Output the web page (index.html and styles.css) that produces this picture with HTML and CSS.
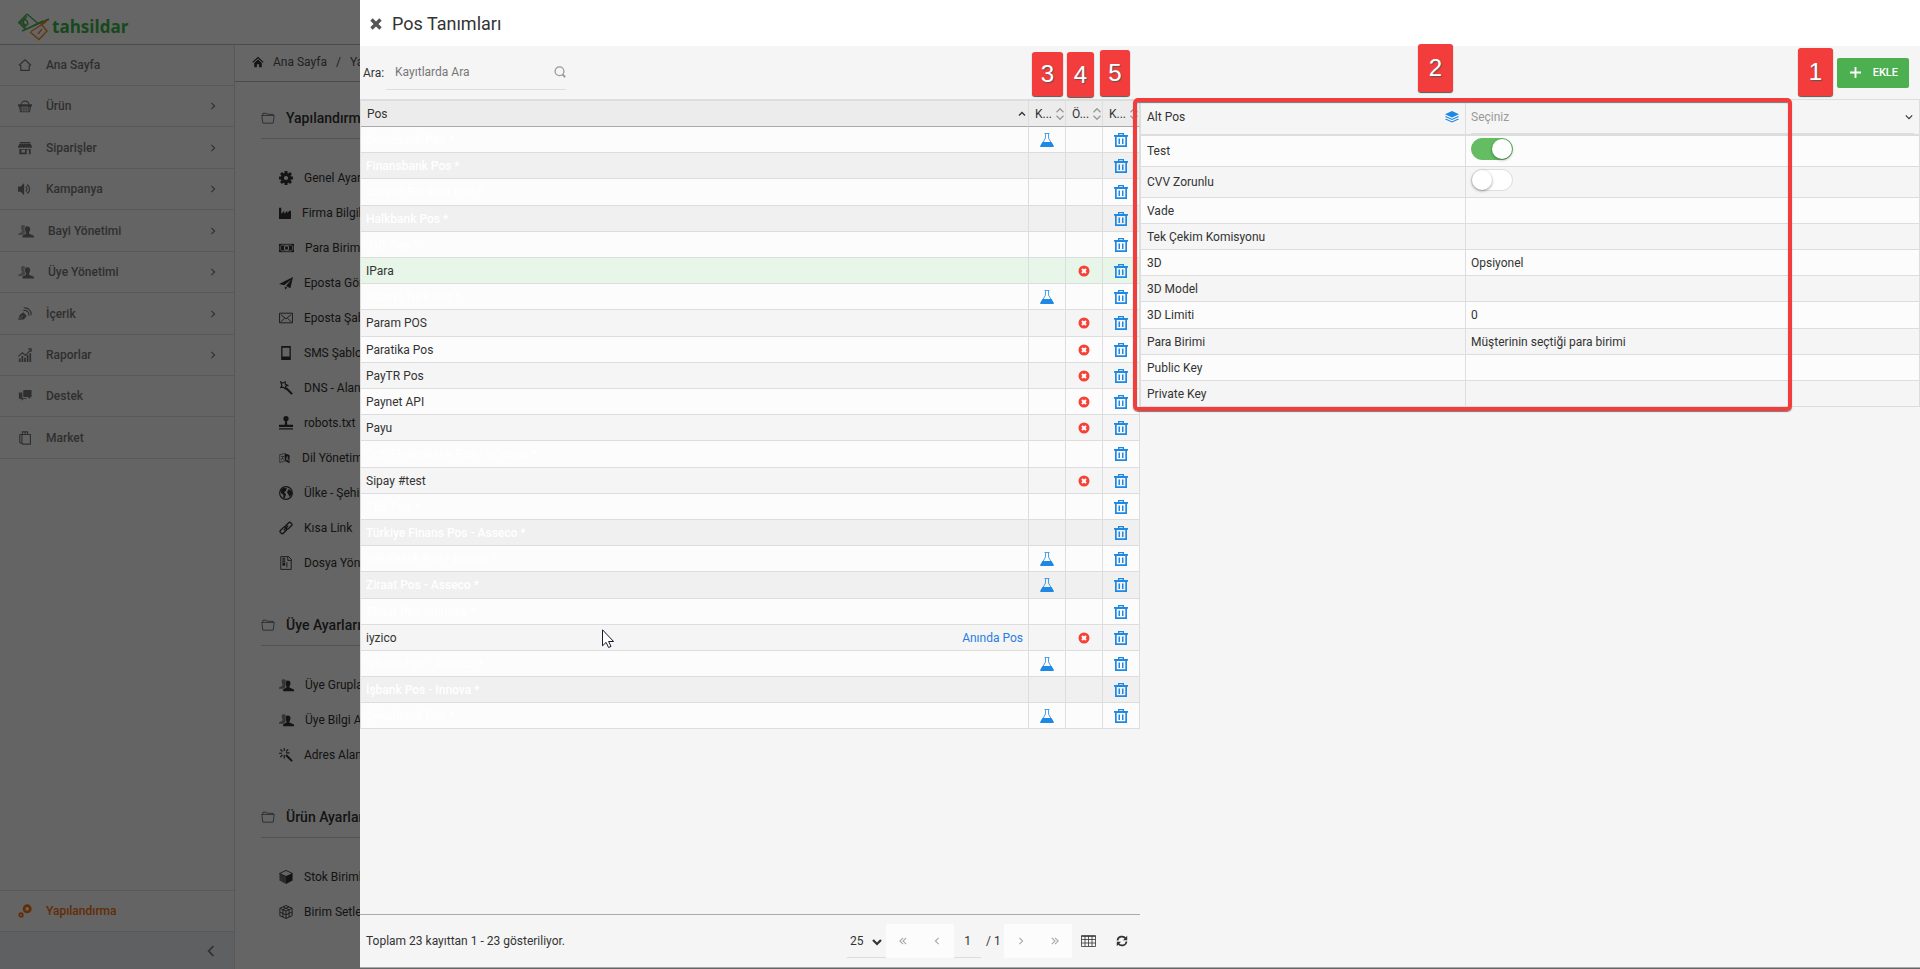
FILE: index.html
```html
<!DOCTYPE html>
<html lang="tr">
<head>
<meta charset="utf-8">
<title>Pos Tanımları</title>
<link rel="stylesheet" href="styles.css">
</head>
<body>
<svg class="sprite" aria-hidden="true">
  <symbol id="i-home" viewBox="0 0 16 16"><path d="M1 8.500 8 2l7 6.500M3.200 8v6.200h9.600V8" fill="none" stroke="currentColor" stroke-width="1.400"/></symbol>
  <symbol id="i-homes" viewBox="0 0 16 16"><path d="M.5 8 8 1l7.500 7-1 1L8 3.200 1.500 9zM3 9.200 8 4.800l5 4.400V15H9.500v-4h-3v4H3z" fill="currentColor"/></symbol>
  <symbol id="i-basket" viewBox="0 0 16 16"><path d="M3.500 7C3.500 1 12.500 1 12.500 7" fill="none" stroke="currentColor" stroke-width="1.300"/><path d="M0 6h16v2.200h-1L13.700 15H2.300L1 8.200H0z" fill="currentColor"/><path d="M2 10.200h12M2.500 12.700h11M5.500 8v7M8 8v7M10.500 8v7" stroke="#fafafa" stroke-width=".8"/></symbol>
  <symbol id="i-shop" viewBox="0 0 16 16"><path d="M2 1h12v1.500H2zM1.500 3h13L16 6.500c0 2-2.500 2-2.700.3-.4 1.700-2.300 1.700-2.600 0-.4 1.700-2.300 1.700-2.700 0-.4 1.700-2.300 1.700-2.700 0-.3 1.700-2.200 1.700-2.600 0C2.500 8.500 0 8.500 0 6.500zM1.500 9h13v6h-13z" fill="currentColor"/><path d="M4 10h4v3H4zM10 10h2.500v5H10z" fill="#fafafa"/></symbol>
  <symbol id="i-sound" viewBox="0 0 16 16"><path d="M0 5h3l4-4v14l-4-4H0z" fill="currentColor"/><path d="M8.800 5.200c1.800 1.400 1.800 4.200 0 5.600M10.500 3c3.700 2.500 3.700 7.500 0 10" fill="none" stroke="currentColor" stroke-width="1.400"/></symbol>
  <symbol id="i-users" viewBox="0 0 18 16"><path d="M5 1C2.500 1 3 5 4.200 7L4 9 0 11v1.500h5l3-2-1-6 1.500-2C7.500 1 6 1 5 1z" fill="currentColor" opacity=".6"/><path d="M10.500 2.500C7 2.500 7.500 7 9 9.500V11L5 13v2.500h13V13.500L12.500 11V9.500C14.500 7 14.500 2.500 10.500 2.500z" fill="currentColor"/></symbol>
  <symbol id="i-pen" viewBox="0 0 16 16"><path d="M0 15 2 9l4-3 4 4-3 4z" fill="currentColor"/><path d="M1 14.500 5.500 10" stroke="#fafafa"/><path d="M6 4c4-1 7 2 6.500 6M6.500 1.200c5-1 9 3 8.500 8.300" fill="none" stroke="currentColor" stroke-width="1.300"/></symbol>
  <symbol id="i-chart" viewBox="0 0 16 16"><path d="M1 12h2v4H1zM4 9h2v7H4zM7 11h2v5H7zM10 8h2v8h-2zM13 6h2v10h-2z" fill="currentColor"/><path d="m.5 9.500 4.500-4 3.500 3L15 1.500M11.500 1H15v3.500" fill="none" stroke="currentColor" stroke-width="1.300"/></symbol>
  <symbol id="i-chat" viewBox="0 0 16 16"><path d="M6 1h9.500v8H14v2.500L11 9H6z" fill="currentColor"/><path d="M1 4h4v6.200h5V11H6.500L4 13.500V11H1z" fill="currentColor"/></symbol>
  <symbol id="i-bag" viewBox="0 0 16 16"><path d="M4.500 4h9.700v11H5.500l-1-1zM2 4h2.500M2 4v9l3 2M5 4V1h3v3M8 1h3v3" fill="none" stroke="currentColor" stroke-width="1.300"/></symbol>
  <symbol id="i-gears" viewBox="0 0 16 16"><circle cx="10.500" cy="5.500" r="3.600" fill="none" stroke="currentColor" stroke-width="3"/><circle cx="3.500" cy="12.500" r="2" fill="none" stroke="currentColor" stroke-width="2"/></symbol>
  <symbol id="i-right" viewBox="0 0 10 10"><path d="m3 1 4 4-4 4" fill="none" stroke="currentColor" stroke-width="1.400"/></symbol>
  <symbol id="i-bold-right" viewBox="0 0 10 10"><path d="m3 1 4 4-4 4" fill="none" stroke="currentColor" stroke-width="2.200"/></symbol>
  <symbol id="i-left" viewBox="0 0 10 10"><path d="M7 1 3 5l4 4" fill="none" stroke="currentColor" stroke-width="1.400"/></symbol>
  <symbol id="i-dright" viewBox="0 0 10 10"><path d="m1 1 4 4-4 4M5 1l4 4-4 4" fill="none" stroke="currentColor" stroke-width="1.400"/></symbol>
  <symbol id="i-dleft" viewBox="0 0 10 10"><path d="M5 1 1 5l4 4M9 1 5 5l4 4" fill="none" stroke="currentColor" stroke-width="1.400"/></symbol>
  <symbol id="i-folder" viewBox="0 0 16 14"><path d="M.700 4h14.600l-1.300 9H2zM2 4V1.500h4.500L7.500 2.700H14V4" fill="none" stroke="currentColor" stroke-width=".9"/></symbol>
  <symbol id="i-gear" viewBox="0 0 16 16"><circle cx="8" cy="8" r="4.200" fill="none" stroke="currentColor" stroke-width="3.600"/><path d="M8 0v3M8 13v3M0 8h3M13 8h3M2.300 2.300l2 2M11.700 11.700l2 2M13.700 2.300l-2 2M4.300 11.700l-2 2" stroke="currentColor" stroke-width="3.400"/></symbol>
  <symbol id="i-factory" viewBox="0 0 16 16"><path d="M0 1h3v8l4-4v4l4-4v3l3-3h2v11H0z" fill="currentColor"/></symbol>
  <symbol id="i-money" viewBox="0 0 18 12"><path d="M0 1h18v10H0z" fill="currentColor"/><path d="M3 2.500h12l1.500 1.500v4L15 9.500H3L1.500 8V4z" fill="none" stroke="#fff"/><circle cx="9" cy="6" r="3.200" fill="#fff"/><circle cx="9" cy="6" r="2" fill="currentColor"/></symbol>
  <symbol id="i-plane" viewBox="0 0 16 16"><path d="M16 1 13 14 8 11.500 14 4 6 10.500 0 9zM6.500 12l3 1.300L7 15.500z" fill="currentColor"/></symbol>
  <symbol id="i-mail" viewBox="0 0 16 14"><path d="M.600 1.500h14.800v11H.600zM2 3l6 5 6-5M2 11.500l4-4M14 11.500l-4-4" fill="none" stroke="currentColor"/></symbol>
  <symbol id="i-phone" viewBox="0 0 16 16"><path d="M2.500 0h11v16h-11zM4 2v10h8V2z" fill="currentColor" fill-rule="evenodd"/></symbol>
  <symbol id="i-wand" viewBox="0 0 16 16"><path d="m8 8 7 7" stroke="currentColor" stroke-width="2.400"/><path d="m2 1 2.500 1.500L7 1l.3 2.800L10 5 7.500 6.200 7 9 4.800 7 2 7.500 3.200 5z" fill="none" stroke="currentColor" stroke-width="1.300"/></symbol>
  <symbol id="i-magic" viewBox="0 0 16 16"><path d="m8 8 7 7" stroke="currentColor" stroke-width="2.400"/><path d="M6 0v3.500M6 8v4M0 6h3.500M8 5.500h4M1.500 1.500l2.500 2.500M10.500 1.500 8 4M1.500 10.500 4 8" stroke="currentColor" stroke-width="1.300"/></symbol>
  <symbol id="i-stamp" viewBox="0 0 16 16"><circle cx="8" cy="3" r="3" fill="currentColor"/><path d="M7 5h2l.5 5H16v2.500H0V10h6.500zM0 14h16v1.500H0z" fill="currentColor"/></symbol>
  <symbol id="i-lang" viewBox="0 0 16 16"><path d="M1 3.500 8 2v10l-7 2zM3 6h4M5 5v2L3 11M4 8l3 2" fill="none" stroke="currentColor" opacity=".8"/><path d="m8 2 6 2v11l-6-3z" fill="currentColor"/><path d="m9.500 11 1.500-5 1.500 6M10 9.500l2 .5" fill="none" stroke="#fff"/></symbol>
  <symbol id="i-globe" viewBox="0 0 16 16"><circle cx="8" cy="8" r="7.300" fill="none" stroke="currentColor" stroke-width="1.300"/><path d="M2 4.500 5 2l4 .5-1 3-2 1.500 2 2.500L6.500 14 5 13.500V10L2 8zM11 3.500 14.500 6l.5 3-3 3.500L10.500 9 9 7z" fill="currentColor"/></symbol>
  <symbol id="i-link" viewBox="0 0 16 16"><g fill="none" stroke="currentColor" stroke-width="1.500"><rect x="7" y="3" width="8" height="4.600" rx="1.500" transform="rotate(-45 11 5.300)"/><rect x="1" y="8.400" width="8" height="4.600" rx="1.500" transform="rotate(-45 5 10.700)"/><path d="m5.500 10.500 5-5"/></g></symbol>
  <symbol id="i-zip" viewBox="0 0 16 16"><path d="M2 .700h9l3 3v11.600H2z" fill="none" stroke="currentColor"/><path d="M4 2h3v9H4z" fill="currentColor"/><path d="M4 3.500h3M4 5.500h3M4 7.500h3" stroke="#fff" stroke-width=".7"/><path d="M10 1v4h4M9 7v6" fill="none" stroke="currentColor"/></symbol>
  <symbol id="i-box" viewBox="0 0 16 16"><path d="M8 .500 15.500 4 8 7.500.500 4z" fill="none" stroke="currentColor"/><path d="m.500 4 7.500 3.500V16L.500 12z" fill="currentColor" opacity=".7"/><path d="M15.500 4 8 7.500V16l7.500-4z" fill="currentColor"/></symbol>
  <symbol id="i-cube" viewBox="0 0 16 16"><path d="m8 .600 7 3.200v8.400l-7 3.200-7-3.200V3.800zM1 3.800 8 7l7-3.200M8 7v8.500M4.500 2.200l7 3.200v8.500M11.500 2.200l-7 3.200v8.500M1 8l7 3.200L15 8" fill="none" stroke="currentColor"/></symbol>
  <symbol id="i-search" viewBox="0 0 12 12"><circle cx="5.500" cy="5.200" r="4.400" fill="none" stroke="currentColor" stroke-width="1.300"/><path d="m8.500 8.500 2.700 2.700" stroke="currentColor" stroke-width="1.800"/></symbol>
  <symbol id="i-x" viewBox="0 0 12 12"><path d="m1.500 1.500 9 9M10.500 1.500l-9 9" stroke="currentColor" stroke-width="3.400"/></symbol>
  <symbol id="i-up" viewBox="0 0 8 12"><path d="m1 7.500 3-3 3 3" fill="none" stroke="currentColor" stroke-width="1.300"/></symbol>
  <symbol id="i-sort" viewBox="0 0 8 12"><path d="m.5 4.200 3.500-3.500 3.500 3.500M.5 7.800l3.500 3.500 3.500-3.500" fill="none" stroke="currentColor" stroke-width="1.300"/></symbol>
  <symbol id="i-flask" viewBox="0 0 14 14"><path d="M4.500.500h5M5.500 1v4L1 13M8.500 1v4L13 13" fill="none" stroke="currentColor" stroke-width=".8"/><path d="M2.500 9h9l2.200 3.700c.5.800 0 1.300-.7 1.300H1c-.7 0-1.200-.5-.7-1.300z" fill="currentColor"/></symbol>
  <symbol id="i-trash" viewBox="0 0 14 14"><path d="M4 0h6v2h4v1.700h-1V14H1V3.700H0V2h4zM5.300 1.200V2h3.400v-.8zM2.700 4v8.300h8.600V4z" fill="currentColor" fill-rule="evenodd"/><path d="M4.500 5.500H6V11H4.500zM8 5.500h1.500V11H8z" fill="currentColor"/></symbol>
  <symbol id="i-off" viewBox="0 0 12 12"><circle cx="6" cy="6" r="5.500" fill="#f44336"/><path d="m4 4 4 4M8 4 4 8" stroke="#fff" stroke-width="2"/></symbol>
  <symbol id="i-layers" viewBox="0 0 14 12"><path d="m7 0 7 3.200-7 3.200-7-3.200z" fill="currentColor"/><path d="m.5 5.500 6.500 3 6.500-3M.5 8l6.500 3 6.500-3" fill="none" stroke="currentColor" stroke-width="1.100"/></symbol>
  <symbol id="i-plus" viewBox="0 0 12 12"><path d="M6 0v12M0 6h12" stroke="currentColor" stroke-width="2"/></symbol>
  <symbol id="i-grid" viewBox="0 0 15 12"><path d="M.5.500h14v11H.5zM.5 1.500h14M.5 4.500h14M.5 8h14M4 1v10.500M7.500 1v10.500M11 1v10.500" fill="none" stroke="currentColor" stroke-width=".8"/></symbol>
  <symbol id="i-refresh" viewBox="0 0 12 12"><path d="M1.500 5.500C2 1 7.500.500 9.800 3.500M10.500 6.500C10 11 4.500 11.500 2.200 8.500" fill="none" stroke="currentColor" stroke-width="1.700"/><path d="M11.200.800v4.400H7zM.800 11.200V6.800H5z" fill="currentColor"/></symbol>
</svg>

<div class="app">
  <header class="topbar">
    <svg class="logo-mark" viewBox="0 0 32 28" aria-hidden="true">
      <g fill="none" stroke-width="1.400">
        <path d="M9 1 .800 9.500 7.500 16.500 25 8M9 1l11 9.500M9 3.500 3 9.500l5 5M4 18 31 6" stroke="#4caf50"/>
        <ellipse cx="7.500" cy="9.500" rx="2" ry="2.800" stroke="#4caf50" transform="rotate(-25 7.500 9.500)"/>
        <path d="m12 19 9 7.500L29 18l-6-7L31 6.500M13 18.500 28 9M24 16l-4 5" stroke="#f08a24"/>
      </g>
    </svg>
    <span class="logo-text">tahsildar</span>
  </header>
  <div class="shell">
    <nav class="sidebar">
      <ul class="nav">
        <li><a href="#"><svg><use href="#i-home"/></svg>Ana Sayfa</a></li>
        <li><a href="#"><svg><use href="#i-basket"/></svg>Ürün<svg class="go"><use href="#i-right"/></svg></a></li>
        <li><a href="#"><svg><use href="#i-shop"/></svg>Siparişler<svg class="go"><use href="#i-right"/></svg></a></li>
        <li><a href="#"><svg><use href="#i-sound"/></svg>Kampanya<svg class="go"><use href="#i-right"/></svg></a></li>
        <li><a href="#"><svg class="wide"><use href="#i-users"/></svg>Bayi Yönetimi<svg class="go"><use href="#i-right"/></svg></a></li>
        <li><a href="#"><svg class="wide"><use href="#i-users"/></svg>Üye Yönetimi<svg class="go"><use href="#i-right"/></svg></a></li>
        <li><a href="#"><svg><use href="#i-pen"/></svg>İçerik<svg class="go"><use href="#i-right"/></svg></a></li>
        <li><a href="#"><svg><use href="#i-chart"/></svg>Raporlar<svg class="go"><use href="#i-right"/></svg></a></li>
        <li><a href="#"><svg><use href="#i-chat"/></svg>Destek</a></li>
        <li><a href="#"><svg><use href="#i-bag"/></svg>Market</a></li>
      </ul>
      <ul class="nav nav-bottom">
        <li><a href="#" class="current"><svg><use href="#i-gears"/></svg>Yapılandırma</a></li>
      </ul>
      <button class="collapse" aria-label="Menüyü daralt"><svg><use href="#i-left"/></svg></button>
    </nav>
    <main class="content">
      <div class="crumbs"><svg><use href="#i-homes"/></svg><a href="#">Ana Sayfa</a><span>/</span><a href="#">Ya</a></div>
      <section class="group">
        <h2><svg><use href="#i-folder"/></svg>Yapılandırma</h2>
        <ul>
          <li><a href="#"><svg><use href="#i-gear"/></svg>Genel Ayar</a></li>
          <li><a href="#"><svg class="slim"><use href="#i-factory"/></svg>Firma Bilgil</a></li>
          <li><a href="#"><svg class="wide"><use href="#i-money"/></svg>Para Birim</a></li>
          <li><a href="#"><svg><use href="#i-plane"/></svg>Eposta Gör</a></li>
          <li><a href="#"><svg><use href="#i-mail"/></svg>Eposta Şab</a></li>
          <li><a href="#"><svg><use href="#i-phone"/></svg>SMS Şablo</a></li>
          <li><a href="#"><svg><use href="#i-wand"/></svg>DNS - Alan</a></li>
          <li><a href="#"><svg><use href="#i-stamp"/></svg>robots.txt</a></li>
          <li><a href="#"><svg class="slim"><use href="#i-lang"/></svg>Dil Yönetimi</a></li>
          <li><a href="#"><svg><use href="#i-globe"/></svg>Ülke - Şehir</a></li>
          <li><a href="#"><svg><use href="#i-link"/></svg>Kısa Link</a></li>
          <li><a href="#"><svg><use href="#i-zip"/></svg>Dosya Yön</a></li>
        </ul>
      </section>
      <section class="group">
        <h2><svg><use href="#i-folder"/></svg>Üye Ayarları</h2>
        <ul>
          <li><a href="#"><svg class="wide"><use href="#i-users"/></svg>Üye Grupla</a></li>
          <li><a href="#"><svg class="wide"><use href="#i-users"/></svg>Üye Bilgi A</a></li>
          <li><a href="#"><svg><use href="#i-magic"/></svg>Adres Alan</a></li>
        </ul>
      </section>
      <section class="group">
        <h2><svg><use href="#i-folder"/></svg>Ürün Ayarları</h2>
        <ul>
          <li><a href="#"><svg><use href="#i-box"/></svg>Stok Biriml</a></li>
          <li><a href="#"><svg><use href="#i-cube"/></svg>Birim Setle</a></li>
        </ul>
      </section>
    </main>
  </div>

  <div class="backdrop"></div>

  <section class="drawer" aria-labelledby="drawer-title">
    <header class="drawer-head">
      <button class="close" aria-label="Kapat"><svg><use href="#i-x"/></svg></button>
      <h1 id="drawer-title">Pos Tanımları</h1>
    </header>
    <div class="toolbar">
      <label for="search">Ara:</label>
      <div class="search"><input id="search" type="text" placeholder="Kayıtlarda Ara"><svg><use href="#i-search"/></svg></div>
      <button class="add"><svg><use href="#i-plus"/></svg>EKLE</button>
    </div>
    <div class="panes">
      <div class="pane">
        <table class="list">
          <colgroup><col><col class="narrow"><col class="narrow"><col class="narrow"></colgroup>
          <thead>
            <tr>
              <th><div class="th">Pos<svg class="asc"><use href="#i-up"/></svg></div></th>
              <th><div class="th">K...<svg><use href="#i-sort"/></svg></div></th>
              <th><div class="th">Ö...<svg><use href="#i-sort"/></svg></div></th>
              <th><div class="th">K...<svg><use href="#i-sort"/></svg></div></th>
            </tr>
          </thead>
          <tbody>
            <tr class="bank"><td>Denizbank Pos *</td><td><svg><use href="#i-flask"/></svg></td><td></td><td><button aria-label="Sil"><svg><use href="#i-trash"/></svg></button></td></tr>
            <tr class="bank"><td>Finansbank Pos *</td><td></td><td></td><td><button aria-label="Sil"><svg><use href="#i-trash"/></svg></button></td></tr>
            <tr class="bank"><td>Garanti Bankası Pos *</td><td></td><td></td><td><button aria-label="Sil"><svg><use href="#i-trash"/></svg></button></td></tr>
            <tr class="bank"><td>Halkbank Pos *</td><td></td><td></td><td><button aria-label="Sil"><svg><use href="#i-trash"/></svg></button></td></tr>
            <tr class="bank"><td>ING Pos *</td><td></td><td></td><td><button aria-label="Sil"><svg><use href="#i-trash"/></svg></button></td></tr>
            <tr class="selected"><td>IPara</td><td></td><td><svg><use href="#i-off"/></svg></td><td><button aria-label="Sil"><svg><use href="#i-trash"/></svg></button></td></tr>
            <tr class="bank"><td>Kuveyt Türk Pos *</td><td><svg><use href="#i-flask"/></svg></td><td></td><td><button aria-label="Sil"><svg><use href="#i-trash"/></svg></button></td></tr>
            <tr><td>Param POS</td><td></td><td><svg><use href="#i-off"/></svg></td><td><button aria-label="Sil"><svg><use href="#i-trash"/></svg></button></td></tr>
            <tr><td>Paratika Pos</td><td></td><td><svg><use href="#i-off"/></svg></td><td><button aria-label="Sil"><svg><use href="#i-trash"/></svg></button></td></tr>
            <tr><td>PayTR Pos</td><td></td><td><svg><use href="#i-off"/></svg></td><td><button aria-label="Sil"><svg><use href="#i-trash"/></svg></button></td></tr>
            <tr><td>Paynet API</td><td></td><td><svg><use href="#i-off"/></svg></td><td><button aria-label="Sil"><svg><use href="#i-trash"/></svg></button></td></tr>
            <tr><td>Payu</td><td></td><td><svg><use href="#i-off"/></svg></td><td><button aria-label="Sil"><svg><use href="#i-trash"/></svg></button></td></tr>
            <tr class="bank"><td>Qnb Finansbank Pos - Inhouse *</td><td></td><td></td><td><button aria-label="Sil"><svg><use href="#i-trash"/></svg></button></td></tr>
            <tr><td>Sipay #test</td><td></td><td><svg><use href="#i-off"/></svg></td><td><button aria-label="Sil"><svg><use href="#i-trash"/></svg></button></td></tr>
            <tr class="bank"><td>TEB Pos *</td><td></td><td></td><td><button aria-label="Sil"><svg><use href="#i-trash"/></svg></button></td></tr>
            <tr class="bank"><td>Türkiye Finans Pos - Asseco *</td><td></td><td></td><td><button aria-label="Sil"><svg><use href="#i-trash"/></svg></button></td></tr>
            <tr class="bank"><td>Vakıfbank Pos - Innova *</td><td><svg><use href="#i-flask"/></svg></td><td></td><td><button aria-label="Sil"><svg><use href="#i-trash"/></svg></button></td></tr>
            <tr class="bank"><td>Ziraat Pos - Asseco *</td><td><svg><use href="#i-flask"/></svg></td><td></td><td><button aria-label="Sil"><svg><use href="#i-trash"/></svg></button></td></tr>
            <tr class="bank"><td>Ziraat Pos - Innova *</td><td></td><td></td><td><button aria-label="Sil"><svg><use href="#i-trash"/></svg></button></td></tr>
            <tr><td><div class="split">iyzico<a href="#">Anında Pos</a></div></td><td></td><td><svg><use href="#i-off"/></svg></td><td><button aria-label="Sil"><svg><use href="#i-trash"/></svg></button></td></tr>
            <tr class="bank"><td>İşbank Pos - Asseco *</td><td><svg><use href="#i-flask"/></svg></td><td></td><td><button aria-label="Sil"><svg><use href="#i-trash"/></svg></button></td></tr>
            <tr class="bank"><td>İşbank Pos - Innova *</td><td></td><td></td><td><button aria-label="Sil"><svg><use href="#i-trash"/></svg></button></td></tr>
            <tr class="bank"><td>Şekerbank Pos *</td><td><svg><use href="#i-flask"/></svg></td><td></td><td><button aria-label="Sil"><svg><use href="#i-trash"/></svg></button></td></tr>
          </tbody>
        </table>
        <footer class="pager">
          <p>Toplam 23 kayıttan 1 - 23 gösteriliyor.</p>
          <div class="size"><select aria-label="Sayfa boyutu"><option>25</option></select><svg><use href="#i-bold-right"/></svg></div>
          <div class="steps"><button aria-label="İlk"><svg><use href="#i-dleft"/></svg></button><button aria-label="Önceki"><svg><use href="#i-left"/></svg></button></div>
          <input class="page" type="text" value="1" aria-label="Sayfa">
          <span class="total">/ 1</span>
          <div class="steps"><button aria-label="Sonraki"><svg><use href="#i-right"/></svg></button><button aria-label="Son"><svg><use href="#i-dright"/></svg></button></div>
          <button class="tool" aria-label="Sütunlar"><svg class="grid"><use href="#i-grid"/></svg></button>
          <button class="tool" aria-label="Yenile"><svg><use href="#i-refresh"/></svg></button>
        </footer>
      </div>
      <div class="pane">
        <table class="props">
          <tbody>
            <tr class="first"><th scope="row"><div class="split"><label for="sub">Alt Pos</label><svg><use href="#i-layers"/></svg></div></th><td><div class="pick"><select id="sub"><option>Seçiniz</option></select><svg><use href="#i-right"/></svg></div></td></tr>
            <tr class="toggle"><th scope="row"><label for="test">Test</label></th><td><input id="test" type="checkbox" checked></td></tr>
            <tr class="toggle"><th scope="row"><label for="cvv">CVV Zorunlu</label></th><td><input id="cvv" type="checkbox"></td></tr>
            <tr><th scope="row">Vade</th><td></td></tr>
            <tr><th scope="row">Tek Çekim Komisyonu</th><td></td></tr>
            <tr><th scope="row">3D</th><td>Opsiyonel</td></tr>
            <tr><th scope="row">3D Model</th><td></td></tr>
            <tr><th scope="row">3D Limiti</th><td>0</td></tr>
            <tr><th scope="row">Para Birimi</th><td>Müşterinin seçtiği para birimi</td></tr>
            <tr><th scope="row">Public Key</th><td></td></tr>
            <tr><th scope="row">Private Key</th><td></td></tr>
          </tbody>
        </table>
      </div>
    </div>
  </section>

  <div class="frame"></div>
  <span class="mark mark-1">1</span>
  <span class="mark mark-2">2</span>
  <span class="mark mark-3">3</span>
  <span class="mark mark-4">4</span>
  <span class="mark mark-5">5</span>
  <svg class="pointer" viewBox="0 0 12 19" aria-hidden="true"><path d="M.500.800v16l3.600-3.400 2.500 5.100 2.400-1.100-2.400-4.900h5z" fill="#fff" stroke="#1a1a2a"/></svg>
</div>
</body>
</html>
```
FILE: styles.css
```css
* { box-sizing: border-box; }
body { margin: 0; font: 12px/16px Roboto, "Liberation Sans", sans-serif; color: #333; }
ul { list-style: none; margin: 0; padding: 0; }
a { color: inherit; text-decoration: none; }
h1, h2, p { margin: 0; }
svg { display: block; flex: none; }
button { border: 0; padding: 0; background: none; font: inherit; color: inherit; }
input, select { font: inherit; color: inherit; border: 0; border-radius: 0; background: none; appearance: none; margin: 0; outline: 0; }
.sprite { position: absolute; width: 0; height: 0; }

.app { position: relative; display: flex; flex-direction: column; min-height: 100vh; overflow: hidden; background: #fff; }

.topbar { display: flex; align-items: center; gap: 2px; height: 45px; padding: 10px 18px 0; border-bottom: 1px solid #bbb; }
.logo-mark { width: 32px; height: 28px; }
.logo-text { font: 700 17px/24px "Open Sans", sans-serif; color: #3cb54a; }

.shell { display: flex; flex: 1; }
.sidebar { display: flex; flex-direction: column; width: 235px; background: #fafafa; border-right: 1px solid #ddd; color: #777; font-weight: 500; }
.nav li { display: flex; height: 41px; border-bottom: 1px solid #ddd; }
.nav li:nth-child(2n + 3):not(:nth-child(9)), .nav li:nth-child(10) { height: 42px; }
.nav a { display: flex; flex: 1; align-items: center; gap: 14px; padding: 0 17px 0 18px; }
.nav svg { width: 14px; height: 14px; }
.nav .wide { width: 16px; }
.nav .go { width: 8px; height: 8px; margin-left: auto; }
.nav-bottom { margin-top: auto; border-top: 1px solid #ddd; }
.nav .current { color: #f57010; }
.collapse { display: flex; align-items: center; justify-content: flex-end; height: 37px; padding-right: 16px; background: #eceff4; }
.collapse svg { width: 14px; height: 12px; }

.content { flex: 1; background: #fcfcfc; }
.crumbs { display: flex; align-items: center; gap: 9px; height: 37px; padding: 0 17px 2px; border-bottom: 1px solid #bbb; background: #fff; color: #555; }
.crumbs svg { width: 12px; height: 12px; color: #333; }
.group { padding: 16px 26px 25px; }
.group h2 { display: flex; align-items: center; gap: 11px; height: 41px; border-bottom: 1px solid #ccc; font-size: 14px; font-weight: 500; }
.group h2 svg { width: 14px; height: 12px; color: #555; }
.group ul { padding: 21px 18px 0; }
.group a { display: flex; align-items: center; gap: 11px; height: 35px; white-space: nowrap; }
.group a svg { width: 14px; height: 14px; }
.group a .wide { width: 15px; }
.group a .slim { width: 12px; height: 12px; }
.group + .group { padding-top: 0; }

.backdrop { position: absolute; inset: 0; background: rgba(0, 0, 0, .6); }

.drawer { position: absolute; inset: 0 0 1px 360px; display: flex; flex-direction: column; background: #f5f5f5; border-bottom: 1px solid #aaa; }
.drawer-head { display: flex; align-items: center; gap: 10px; height: 46px; padding: 2px 10px 0; background: #fff; }
.close { color: #555; }
.close svg { width: 12px; height: 12px; }
.drawer-head h1 { font-size: 18px; line-height: 24px; font-weight: 400; }
.toolbar { display: flex; align-items: center; height: 53px; padding: 0 11px 0 3px; }
.search { display: flex; align-items: center; width: 180px; height: 34px; margin-left: 2px; border-bottom: 1px solid #ddd; }
.search input { flex: 1; min-width: 0; padding: 0 9px; }
.search input::placeholder { color: #777; }
.search svg { width: 12px; height: 12px; color: #999; }
.add { display: flex; align-items: center; justify-content: space-between; width: 72px; height: 30px; margin-left: auto; padding: 0 11px 0 13px; border-radius: 2px; background: #4caf50; color: #fff; font-size: 11px; font-weight: 500; }
.add svg { width: 11px; height: 11px; }

.panes { display: flex; flex: 1; min-height: 0; }
.pane { display: flex; flex: 1; flex-direction: column; min-width: 0; }
table { width: 100%; table-layout: fixed; border-spacing: 0; border-left: 1px solid #ddd; }
td, th { height: 26px; padding: 0 5px; border: solid #ddd; border-width: 0 1px 1px 0; text-align: left; font-weight: 400; }
.split { display: flex; align-items: center; justify-content: space-between; }
tbody tr { background: #fcfcfc; }
tbody tr:nth-child(even) { background: #f5f5f5; }

.narrow { width: 37px; }
.list th { height: 28px; padding: 0 1px 0 6px; border-top: 2px solid #ddd; border-bottom: 1px solid #aaa; background: #ececec; }
.th { display: flex; align-items: center; justify-content: space-between; }
.th svg { width: 8px; height: 12px; color: #999; }
.th .asc { margin-right: 1px; color: #333; }
.list tbody tr:nth-child(5n + 3):not(:last-child) td { height: 27px; }
.list td svg { width: 14px; height: 14px; margin: 0 auto; color: #1e88e5; }
.list td:nth-child(3) svg { width: 12px; height: 12px; }
.list td button { display: block; margin: 0 auto; }
.list .bank td { color: #fff; font-weight: 500; }
.list .bank:nth-child(even) { background: #f0f0f0; }
.list .selected:nth-child(even) { background: #e8f5e9; }
.list td a { color: #2a7de1; }

.pager { display: flex; align-items: center; height: 53px; margin-top: auto; padding: 0 2px 0 6px; border-top: 1px solid #aaa; }
.pager p { flex: 1; }
.size { position: relative; width: 39px; height: 33px; border-bottom: 1px solid #ddd; }
.size select { width: 100%; height: 100%; padding: 0 3px; }
.size svg { position: absolute; right: 4px; top: 12px; width: 10px; height: 10px; transform: rotate(90deg); }
.steps { display: flex; width: 68px; height: 34px; background: #fcfcfc; color: #aaa; }
.steps button { display: flex; flex: 1; align-items: center; justify-content: center; }
.steps svg { width: 8px; height: 8px; }
.page { width: 27px; height: 34px; border-bottom: 1px solid #ddd; text-align: center; }
.total { width: 23px; padding-left: 5px; }
.tool { display: flex; justify-content: center; width: 33px; }
.tool svg { width: 12px; height: 12px; }
.tool .grid { width: 15px; }

.props { border-top: 1px solid #ddd; }
.props th { width: 325px; padding: 0 6px; }
.props .first td, .props .first th { height: 36px; border-bottom-width: 2px; }
.props .first svg { width: 14px; height: 12px; color: #1e88e5; }
.props .toggle td, .props .toggle th { height: 31px; }
.props .toggle td { padding-top: 2px; vertical-align: top; }
.props tr:nth-child(8) td { height: 27px; }
.props tr:nth-child(even) { background: #fcfcfc; }
.props tr:nth-child(odd) { background: #f5f5f5; }
.pick { position: relative; height: 33px; border-bottom: 1px solid #ddd; }
.pick select { width: 100%; height: 100%; padding: 0; color: #999; }
.props .pick svg { position: absolute; right: 0; top: 12px; width: 10px; height: 8px; color: #333; transform: rotate(90deg); }
.toggle input { display: block; width: 42px; height: 22px; border: 1px solid #ddd; border-radius: 11px; background: #fff; }
.toggle input::before { content: ""; display: block; width: 20px; height: 20px; border-radius: 50%; background: #fff; box-shadow: 0 1px 3px rgba(0, 0, 0, .4); }
.toggle input:checked { border-color: #64bd63; background: #64bd63; }
.toggle input:checked::before { margin-left: 20px; }

.frame { position: absolute; left: 1133px; top: 98px; width: 659px; height: 313px; border: 4px solid #f33c3c; border-radius: 5px; box-shadow: 0 1px 1px #777, inset 0 1px 1px #777; }
.mark { position: absolute; display: flex; align-items: center; justify-content: center; border-radius: 3px; background: #f33c3c; box-shadow: 0 1px 1px #555; color: #fff; font: 24px/28px "Liberation Sans", sans-serif; text-shadow: 1px 1px 1px #555; }
.mark-1 { left: 1798px; top: 48px; width: 35px; height: 48px; }
.mark-2 { left: 1418px; top: 44px; width: 35px; height: 48px; }
.mark-3 { left: 1032px; top: 52px; width: 31px; height: 44px; }
.mark-4 { left: 1067px; top: 52px; width: 27px; height: 45px; }
.mark-5 { left: 1100px; top: 50px; width: 30px; height: 46px; }
.pointer { position: absolute; left: 602px; top: 629px; width: 12px; height: 19px; }
```
